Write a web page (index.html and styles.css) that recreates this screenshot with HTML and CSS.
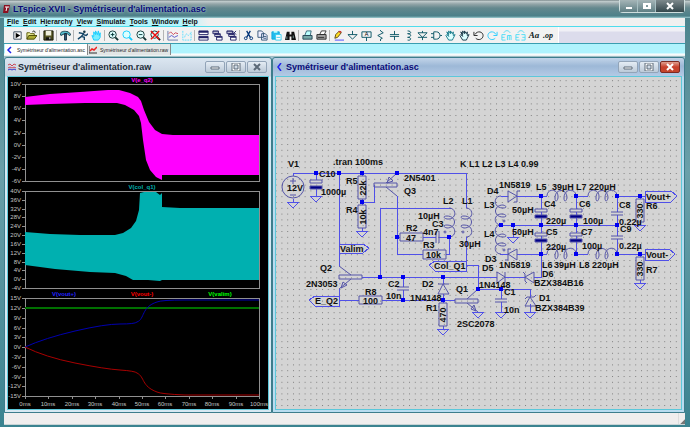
FILE: index.html
```
<!DOCTYPE html>
<html lang="fr">
<head>
    <meta charset="UTF-8">
    <meta name="viewport" content="width=device-width, initial-scale=1.0">
    <title>LTspice XVII - Symétriseur d'alimentation.asc</title>
    <link rel="stylesheet" href="styles.css">
</head>
<body>
    <!-- Title bar -->
    <header class="titlebar">
        <svg class="logo" viewBox="0 0 8 10"><path d="M1 1h6l-2 8H0z" fill="#8c1020"/><path d="M2 3h4M4 3l-1 4" stroke="#fff" fill="none"/></svg>
        <h1>LTspice XVII - Symétriseur d'alimentation.asc</h1>
        <div class="caption">
            <button aria-label="Minimize"><svg viewBox="0 0 12 10"><path d="M3 6h6v2H3z"/></svg></button>
            <button aria-label="Maximize"><svg viewBox="0 0 12 10"><path fill-rule="evenodd" d="M2 2h8v6H2zM5 4h2v2H5z"/></svg></button>
            <button class="close" aria-label="Close"><svg viewBox="0 0 12 10"><path d="M3 2l6 6M9 2l-6 6" class="cross"/></svg></button>
        </div>
    </header>

    <nav class="menu">
        <a href="#"><u>F</u>ile</a>
        <a href="#"><u>E</u>dit</a>
        <a href="#">H<u>i</u>erarchy</a>
        <a href="#"><u>V</u>iew</a>
        <a href="#"><u>S</u>imulate</a>
        <a href="#"><u>T</u>ools</a>
        <a href="#"><u>W</u>indow</a>
        <a href="#"><u>H</u>elp</a>
    </nav>

    <!-- Toolbar -->
    <div class="toolbar">
        <div class="tools">
            <button aria-label="New schematic"><svg viewBox="0 0 12 12"><path d="M2 2h8v8H2z" fill="#fff" stroke="#345"/><path d="M4 3l5 3-5 3z" fill="#000"/></svg></button>
            <button aria-label="Open"><svg viewBox="0 0 12 12"><path d="M1 10V3h3l1 1h4v2" fill="#ee9" stroke="#550"/><path d="M1 10l2-4h9l-3 4z" fill="#aa3" stroke="#440"/><path d="M7 2c2-2 3 0 3 1" fill="none" stroke="#000"/></svg></button>
            <i></i>
            <button aria-label="Save"><svg viewBox="0 0 12 12"><path d="M1 1h10v10H1z" fill="#552" stroke="#110"/><path d="M3 1h6v5H3z" fill="#eed"/><path d="M3 8h6v3H3z" fill="#111"/><path d="M7 8h1v2H7z" fill="#fff"/></svg></button>
            <i></i>
            <button aria-label="Control panel"><svg viewBox="0 0 12 12"><path d="M0 4c2-3 5-3 9-2l3 3-2 1-2-2H5L1 6z" fill="#5bc" stroke="#134"/><path d="M5 4h2v7H5z" fill="#368" stroke="#123"/></svg></button>
            <i></i>
            <button aria-label="Run"><svg viewBox="0 0 12 12"><circle cx="8" cy="2" r="1.4" fill="#134"/><path d="M2 3l5 1-2 3 3 1v3M5 7l-4 3M7 5l3 1 2-2" fill="none" stroke="#146" stroke-width="1.5"/></svg></button>
            <button aria-label="Halt"><svg viewBox="0 0 12 12"><path d="M3 11L1 6l2 1V2l2 3V1l2 4 1-4 1 5 1-3v5l-2 3z" fill="#7ef" stroke="#1cf"/></svg></button>
            <i></i>
            <button aria-label="Zoom in"><svg viewBox="0 0 12 12"><use href="#lens" class="dark"/><path d="M3 5h4M5 3v4" stroke="#033"/></svg></button>
            <button aria-label="Pan"><svg viewBox="0 0 12 12"><use href="#lens" class="cyan"/></svg></button>
            <button aria-label="Zoom out"><svg viewBox="0 0 12 12"><use href="#lens" class="dark"/><path d="M3 5h4" stroke="#033"/></svg></button>
            <button aria-label="Zoom full extents"><svg viewBox="0 0 12 12"><use href="#lens" class="dark"/><path d="M1 1l9 9M10 1L1 10" stroke="#e11" stroke-width="1.6"/></svg></button>
            <i></i>
            <button aria-label="Autorange"><svg viewBox="0 0 12 12"><path d="M1 1v10h11" fill="none" stroke="#67a"/><path d="M2 4l2-2 3 3 2-2 3 1" fill="none" stroke="#c45"/><path d="M2 8l3-2 3 2 4-2" fill="none" stroke="#55c"/></svg></button>
            <button aria-label="Plot settings"><svg viewBox="0 0 12 12"><path d="M2 1v10h9V2M4 8c1-5 3-4 4-2l3-3" fill="none" stroke="#5df" stroke-dasharray="2 1"/></svg></button>
            <i></i>
            <button aria-label="Tile windows"><svg viewBox="0 0 12 12"><path d="M1 1h10v4H1zM1 7h10v4H1z" fill="#fff" stroke="#226"/><path d="M1 1h10v2H1zM1 7h10v2H1z" fill="#226"/></svg></button>
            <button aria-label="Cascade windows"><svg viewBox="0 0 12 12"><use href="#cascade"/></svg></button>
            <button aria-label="Close all windows"><svg viewBox="0 0 12 12"><use href="#cascade"/><path d="M7 1l4 4M11 1L7 5" stroke="#226"/></svg></button>
            <i></i>
            <button aria-label="Cut"><svg viewBox="0 0 12 12"><path d="M4 1l4 7M8 1L4 8" stroke="#037" stroke-width="1.4"/><circle cx="3" cy="9" r="1.5" class="cut"/><circle cx="9" cy="9" r="1.5" class="cut"/></svg></button>
            <button aria-label="Copy"><svg viewBox="0 0 12 12"><path d="M1 1h4l2 2v5H1zM5 4h4l2 2v5H5z" fill="#eef" stroke="#357"/><path d="M7 7h3M7 9h3" stroke="#357"/></svg></button>
            <button aria-label="Paste"><svg viewBox="0 0 12 12"><path d="M1 2h8v8H1z" fill="#2be" stroke="#1ad"/><path d="M3 1h4v2H3z" fill="#bff"/><path d="M5 5h6v6H5z" fill="#fff" stroke="#3ce"/><path d="M6 8h4" stroke="#3ce"/></svg></button>
            <button aria-label="Find"><svg viewBox="0 0 12 12"><path d="M2 2h3v3h2V2h3l2 9H7V7H5v4H0z" fill="#111"/><path d="M2 7v3M9 6v3" stroke="#799"/></svg></button>
            <i></i>
            <button aria-label="Print setup"><svg viewBox="0 0 12 12"><path d="M3 6l2-5h5l-1 5z" fill="#bff" stroke="#367"/><path d="M1 6h10v4H1z" fill="#7aa" stroke="#245"/></svg></button>
            <button aria-label="Print"><svg viewBox="0 0 12 12"><path d="M4 5l2-4h5L9 5z" fill="#fff" stroke="#333"/><path d="M1 5h10v5H1z" fill="#aaa" stroke="#222"/><path d="M2 8h7" stroke="#222"/></svg></button>
            <i></i>
            <button aria-label="Wire"><svg viewBox="0 0 12 12"><path d="M2 9l1-4 4-4 2 2-4 5z" fill="#fd2" stroke="#541"/><path d="M6 1h3v2H7z" fill="#c33"/><path d="M2 11h10" stroke="#44f"/></svg></button>
            <button aria-label="Ground"><svg viewBox="0 0 12 12"><path d="M6 1v4M1 5h10L6 10z" class="part"/></svg></button>
            <button aria-label="Label net"><svg viewBox="0 0 12 12"><path d="M1 2h10v6H1zM6 8v4" class="part"/><text x="4" y="7" class="mini">A</text></svg></button>
            <button aria-label="Resistor"><svg viewBox="0 0 12 12"><path d="M6 0v1l3 2-6 3 5 3-2 1v2" class="part"/></svg></button>
            <button aria-label="Capacitor"><svg viewBox="0 0 12 12"><path d="M6 1v4M1 5h10M1 7h10M6 7v4" class="part"/></svg></button>
            <button aria-label="Inductor"><svg viewBox="0 0 12 12"><path d="M5 1c5 0 4 4 0 3 5 0 4 4 0 4 5 0 4 4 0 3" class="part"/></svg></button>
            <button aria-label="Diode"><svg viewBox="0 0 12 12"><path d="M6 1v2M1 3h10L6 8zM1 8h10M6 8v3" class="part"/></svg></button>
            <button aria-label="Component"><svg viewBox="0 0 12 12"><path d="M3 2h3c5 0 5 8 0 8H3zM0 4h3M0 8h3M10 6h2" class="part"/></svg></button>
            <button aria-label="Move"><svg viewBox="0 0 12 12"><use href="#palm" stroke="#178"/></svg></button>
            <button aria-label="Drag"><svg viewBox="0 0 12 12"><use href="#palm" stroke="#134"/></svg></button>
            <button aria-label="Undo"><svg viewBox="0 0 12 12"><path d="M2 5c3-5 9-3 9 1s-5 6-8 3M1 2v4h4" fill="none" stroke="#222"/></svg></button>
            <button aria-label="Redo"><svg viewBox="0 0 12 12"><path d="M10 5c-3-5-9-3-9 1s5 6 8 3M11 2v4H7" fill="none" stroke="#2cf"/></svg></button>
            <button aria-label="Rotate"><svg viewBox="0 0 12 12"><path d="M5 5H1v6h4M1 8h3M7 11V6h4v5M9 6v5M3 3c2-3 5-3 7 0" class="flip"/></svg></button>
            <button aria-label="Mirror"><svg viewBox="0 0 12 12"><path d="M5 5H1v6h4M1 8h3M7 5h4v6H7M8 8h3M3 3c2-3 5-3 7 0" class="flip"/></svg></button>
            <button class="word">Aa</button>
            <button class="word small">.op</button>
        </div>
    </div>

    <div class="tabs">
        <a href="#schematic" class="tab active">
            <svg viewBox="0 0 8 8"><path d="M5 1L2 4l3 3" fill="none" stroke="#22e" stroke-width="1.5"/></svg>
            Symétriseur d'alimentation.asc
        </a>
        <a href="#waveform" class="tab">
            <svg viewBox="0 0 8 8"><path d="M0 0v7h8" fill="none" stroke="#333"/><path d="M1 5l2-2 2 1 3-3" fill="none" stroke="#e22" stroke-width="1.5"/></svg>
            Symétriseur d'alimentation.raw
        </a>
    </div>

    <main class="workspace">
        <!-- Waveforms -->
        <section class="window" id="waveform">
            <header>
                <svg class="icon" viewBox="0 0 8 8"><path d="M0 2l2-1 2 2 2-2 2 1M0 5l2-1 2 1 2-1 2 1" fill="none" stroke="#c45"/><path d="M0 7l2-1 2 1 2-1 2 1" fill="none" stroke="#33c"/></svg>
                <h2>Symétriseur d'alimentation.raw</h2>
                <div class="controls">
                    <button aria-label="Minimize"><svg viewBox="0 0 10 8"><path d="M1 4h8v2H1z"/></svg></button>
                    <button aria-label="Maximize"><svg viewBox="0 0 10 8"><path fill-rule="evenodd" d="M1 0h8v8H1zM3 2h4v4H3z"/></svg></button>
                    <button aria-label="Close"><svg viewBox="0 0 10 8"><path d="M2 1l6 6M8 1L2 7" class="cross"/></svg></button>
                </div>
            </header>
            <div class="pane plots">
                <svg viewBox="8 77 260 332">
                    <g class="trace-name">
                        <text x="142" y="82" fill="#f0f">V(e_q2)</text>
                        <text x="142" y="189" fill="#00b0b0">V(col_q1)</text>
                        <text x="64" y="296" fill="#22f">V(vout+)</text>
                        <text x="142" y="296" fill="#f00">V(vout-)</text>
                        <text x="220" y="296" fill="#0f0">V(valim)</text>
                    </g>

                    <path class="frame" d="M25 84H259V181H25zM22 84h3M22 96h3M22 108h3M22 120h3M22 133h3M22 145h3M22 157h3M22 169h3M22 181h3"/>
                    <path fill="#f0f" d="M25 97L50 94 80 92 108 90H119L130 93 138 97 141 101 144 110 149 122 155 130 162 134 173 135H259V175H162V180L156 177 150 170 146 160 143 140 141 123 139 116 134 110 125 105 117 103H85L50 104 25 105z"/>

                    <path class="frame" d="M25 191H259V288H25zM22 191h3M22 200h3M22 209h3M22 217h3M22 226h3M22 235h3M22 244h3M22 253h3M22 262h3M22 270h3M22 279h3M22 288h3"/>
                    <path fill="#00b0b0" d="M25 232L50 234 80 235H115L123 233 131 228 136 221 139 210 140 193 144 192H156L160 195 162 193V207L180 208H259V280H162L160 281 148 280H133L126 276 115 273 90 272 55 269 25 265z"/>

                    <path class="frame" d="M25 298H259V396H25zM22 298h3M22 308h3M22 318h3M22 328h3M22 337h3M22 347h3M22 357h3M22 367h3M22 377h3M22 386h3M22 396h3M25 396v3M48 396v3M72 396v3M95 396v3M119 396v3M142 396v3M165 396v3M189 396v3M212 396v3M236 396v3M259 396v3"/>
                    <path class="wave" stroke="#007000" stroke-width="2" d="M25 308H259"/>
                    <path class="wave" stroke="#0000b0" d="M25 347Q45 338 75 331T120 324 137 322C145 319 141 307 157 302Q161 300 185 300H259"/>
                    <path class="wave" stroke="#a80000" d="M25 347Q45 357 75 363T120 370 137 373C145 377 141 386 157 392Q161 394 185 395H259"/>

                    <g class="scale">
                        <text x="21" y="86">10V</text><text x="21" y="98">8V</text><text x="21" y="110">6V</text><text x="21" y="122">4V</text><text x="21" y="135">2V</text><text x="21" y="147">0V</text><text x="21" y="159">-2V</text><text x="21" y="171">-4V</text><text x="21" y="183">-6V</text>
                        <text x="21" y="193">40V</text><text x="21" y="202">36V</text><text x="21" y="211">32V</text><text x="21" y="219">28V</text><text x="21" y="228">24V</text><text x="21" y="237">20V</text><text x="21" y="246">16V</text><text x="21" y="255">12V</text><text x="21" y="264">8V</text><text x="21" y="272">4V</text><text x="21" y="281">0V</text><text x="21" y="290">-4V</text>
                        <text x="21" y="300">15V</text><text x="21" y="310">12V</text><text x="21" y="320">9V</text><text x="21" y="330">6V</text><text x="21" y="339">3V</text><text x="21" y="349">0V</text><text x="21" y="359">-3V</text><text x="21" y="369">-6V</text><text x="21" y="379">-9V</text><text x="21" y="388">-12V</text><text x="21" y="398">-15V</text>
                    </g>
                    <g class="scale time">
                        <text x="25" y="406">0ms</text><text x="48" y="406">10ms</text><text x="72" y="406">20ms</text><text x="95" y="406">30ms</text><text x="119" y="406">40ms</text><text x="142" y="406">50ms</text><text x="165" y="406">60ms</text><text x="189" y="406">70ms</text><text x="212" y="406">80ms</text><text x="236" y="406">90ms</text><text x="259" y="406">100ms</text>
                    </g>
                </svg>
            </div>
        </section>

        <!-- Schematic -->
        <section class="window current" id="schematic">
            <header>
                <svg class="icon" viewBox="0 0 8 8"><path d="M5 0L2 4l3 4" fill="none" stroke="#22e" stroke-width="1.5"/></svg>
                <h2>Symétriseur d'alimentation.asc</h2>
                <div class="controls">
                    <button aria-label="Minimize"><svg viewBox="0 0 10 8"><path d="M1 4h8v2H1z"/></svg></button>
                    <button aria-label="Maximize"><svg viewBox="0 0 10 8"><path fill-rule="evenodd" d="M1 0h8v8H1zM3 2h4v4H3z"/></svg></button>
                    <button class="close" aria-label="Close"><svg viewBox="0 0 10 8"><path d="M2 1l6 6M8 1L2 7" class="cross"/></svg></button>
                </div>
            </header>
            <div class="pane circuit">
                <svg viewBox="276 77 405 332">
                    <defs>
                        <pattern id="dots" x="293" y="173" width="5.8" height="5.8" patternUnits="userSpaceOnUse"><rect width="1" height="1" fill="#808080"/></pattern>
                        <path id="gnd" d="M-6 0H6L0 6z"/>
                        <path id="res" d="M-4 0H4V23H-4z"/>
                        <path id="coil" d="M0 0C0-8 12-8 11 2 10 6 8 6 8 2 8-8 20-8 20 2 19 6 17 6 17 2 17-8 29-8 29 0"/>
                        <g id="ecap"><path d="M-6 0H6V3H-6z"/><path d="M-6 6H6V9H-6z" fill="#008"/></g>
                        <path id="cap" d="M-6 0H6M-6 3H6"/>
                        <rect id="node" x="-1" y="-1" width="4" height="4"/>
                    </defs>
                    <rect x="276" y="77" width="405" height="332" fill="url(#dots)"/>

                    <g class="wires">
                        <path d="M293 176V173H466V208M293 199V202M316 173V180M316 189V196M339 173V266M362 173V176M362 199V205M362 228V231M362 202H374V185M397 196V254H423M451 208H380V277M397 237H400M423 237H436M439 237H449V254H446M466 237V265H478V289"/>
                        <path d="M362 277H497M505 277H525M534 277H541V196M403 277V287M403 290V300M443 277V284M443 294V303M339 289V300H359M382 300H455M478 289H530V297M501 289V299M501 302V312M530 304V312M443 326V329"/>
                        <path d="M501 196H508M517 196H547M576 196H588M617 196H645M501 225H617M513 225V237M500 254H508M517 254H547M576 254H588M617 254H645M576 196V254M617 196V212M617 215V236M617 239V254M640 196V199M640 222V225M640 254V257M640 280V283"/>
                        <use href="#gnd" x="293" y="202"/><use href="#gnd" x="316" y="196"/><use href="#gnd" x="362" y="231"/><use href="#gnd" x="478" y="312"/><use href="#gnd" x="501" y="312"/><use href="#gnd" x="530" y="312"/><use href="#gnd" x="443" y="329"/><use href="#gnd" x="513" y="237"/><use href="#gnd" x="640" y="225"/><use href="#gnd" x="640" y="283"/>
                        <path d="M339 244H363L369 248 363 253H339zM339 296H315L309 300 315 306H339zM466 261H435L429 265 435 271H466zM645 191H671L677 196 671 202H645zM645 249H669L675 254 669 260H645z"/>
                    </g>

                    <!-- Parts -->
                    <g class="parts">
                        <circle cx="293" cy="187" r="11"/><path d="M290 181h6M293 178v6M290 195h6"/>
                        <use href="#res" x="362" y="176"/><use href="#res" x="362" y="205"/><use href="#res" x="640" y="199"/><use href="#res" x="640" y="257"/><use href="#res" x="443" y="303"/>
                        <path d="M400 233H423V241H400zM423 250H446V259H423zM359 296H382V304H359z"/>
                        <path d="M436 231V243M439 231V243"/>
                        <g class="cover"><use href="#ecap" x="316" y="180"/><use href="#ecap" x="541" y="209"/><use href="#ecap" x="576" y="209"/><use href="#ecap" x="541" y="233"/><use href="#ecap" x="576" y="233"/></g>
                        <g class="cover"><path stroke="none" d="M396 288H410V290H396zM494 300H508V302H494zM610 213H624V215H610zM610 237H624V239H610z"/></g>
                        <use href="#cap" x="403" y="287"/><use href="#cap" x="501" y="299"/><use href="#cap" x="617" y="212"/><use href="#cap" x="617" y="236"/>
                        <path d="M374 183H397V187H374zM397 173L386 183M386 187L397 196M387 183l2-6 4 4zM339 275H362V279H339zM339 266L351 275M351 279L339 289M341 288l2-6 4 3zM455 299H478V303H455zM478 289L467 299M467 303L478 312M476 311l-5-2 3-4z"/>
                        <path d="M508 191V202L517 196zM520 191H517V202H514M517 249V260L508 254zM511 249H508V260H505M497 272V283L505 277zM505 272V283M534 272V283L525 277zM523 272L525 274V281L527 283M438 294H449L443 284zM438 284H449M525 306H536L530 297zM525 299L527 297H534L536 295"/>
                        <use href="#coil" transform="translate(547 196)"/><use href="#coil" transform="translate(588 196)"/><use href="#coil" transform="translate(547 254)"/><use href="#coil" transform="translate(588 254)"/>
                        <use href="#coil" transform="translate(449 208) rotate(90)"/><use href="#coil" transform="translate(466 208) rotate(90)"/>
                        <use href="#coil" transform="translate(501 225) rotate(-90)"/><use href="#coil" transform="translate(501 254) rotate(-90)"/>
                        <circle cx="445" cy="232" r="1"/><circle cx="463" cy="232" r="1"/><circle cx="504" cy="221" r="1"/><circle cx="504" cy="250" r="1"/>
                    </g>

                    <g class="nodes">
                        <use href="#node" x="315" y="172"/><use href="#node" x="338" y="172"/><use href="#node" x="361" y="172"/><use href="#node" x="396" y="172"/><use href="#node" x="361" y="201"/><use href="#node" x="396" y="236"/><use href="#node" x="448" y="236"/>
                        <use href="#node" x="379" y="276"/><use href="#node" x="402" y="276"/><use href="#node" x="442" y="276"/><use href="#node" x="402" y="299"/><use href="#node" x="442" y="299"/><use href="#node" x="477" y="288"/><use href="#node" x="500" y="288"/>
                        <use href="#node" x="540" y="195"/><use href="#node" x="575" y="195"/><use href="#node" x="616" y="195"/><use href="#node" x="639" y="195"/><use href="#node" x="500" y="224"/><use href="#node" x="512" y="224"/><use href="#node" x="540" y="224"/><use href="#node" x="575" y="224"/><use href="#node" x="616" y="224"/>
                        <use href="#node" x="540" y="253"/><use href="#node" x="575" y="253"/><use href="#node" x="616" y="253"/><use href="#node" x="639" y="253"/>
                    </g>

                    <g class="labels">
                        <text x="288" y="167">V1</text><text x="287" y="191">12V</text><text x="319" y="177">C10</text><text x="321" y="195">1000µ</text>
                        <text x="333" y="165">.tran 100ms</text><text x="346" y="184">R5</text><text x="346" y="213">R4</text>
                        <text x="404" y="181">2N5401</text><text x="404" y="194">Q3</text><text x="460" y="167">K L1 L2 L3 L4 0.99</text>
                        <text x="443" y="204">L2</text><text x="462" y="204">L1</text><text x="418" y="219">10µH</text><text x="432" y="227">C3</text><text x="406" y="231">R2</text><text x="423" y="235">4n7</text><text x="406" y="241">47</text><text x="423" y="248">R3</text><text x="426" y="258">10k</text><text x="459" y="247">30µH</text>
                        <text x="340" y="252">Valim</text><text x="434" y="269">Col_Q1</text><text x="320" y="271">Q2</text><text x="306" y="287">2N3053</text><text x="315" y="304">E_Q2</text><text x="365" y="295">R8</text><text x="363" y="304">100</text>
                        <text x="388" y="287">C2</text><text x="386" y="299">10n</text><text x="422" y="287">D2</text><text x="410" y="301">1N4148</text><text x="426" y="311">R1</text><text x="456" y="292">Q1</text><text x="457" y="327">2SC2078</text>
                        <text x="482" y="271">D5</text><text x="485" y="262">D3</text><text x="499" y="268">1N5819</text><text x="479" y="288">1N4148</text><text x="504" y="295">C1</text><text x="504" y="313">10n</text>
                        <text x="487" y="194">D4</text><text x="499" y="188">1N5819</text><text x="484" y="208">L3</text><text x="484" y="237">L4</text><text x="512" y="213">50µH</text><text x="512" y="235">50µH</text>
                        <text x="536" y="190">L5</text><text x="552" y="190">39µH</text><text x="576" y="190">L7</text><text x="589" y="190">220µH</text><text x="544" y="207">C4</text><text x="579" y="207">C6</text><text x="619" y="208">C8</text>
                        <text x="546" y="224">220µ</text><text x="583" y="224">100µ</text><text x="619" y="225">0.22µ</text><text x="546" y="235">C5</text><text x="581" y="235">C7</text><text x="620" y="232">C9</text>
                        <text x="546" y="250">220µ</text><text x="582" y="249">100µ</text><text x="619" y="249">0.22µ</text><text x="542" y="268">L6</text><text x="554" y="268">39µH</text><text x="579" y="268">L8</text><text x="592" y="268">220µH</text>
                        <text x="646" y="200">Vout+</text><text x="646" y="209">R6</text><text x="646" y="258">Vout-</text><text x="646" y="273">R7</text>
                        <text x="542" y="277">D6</text><text x="534" y="286">BZX384B16</text><text x="539" y="301">D1</text><text x="535" y="311">BZX384B39</text>
                        <g class="upright">
                            <text transform="translate(366 188) rotate(-90)">22k</text><text transform="translate(366 217) rotate(-90)">10k</text><text transform="translate(643 211) rotate(-90)">330</text><text transform="translate(643 269) rotate(-90)">330</text><text transform="translate(446 315) rotate(-90)">470</text>
                        </g>
                    </g>
                </svg>
            </div>
        </section>
    </main>

    <footer class="status"><span></span></footer>

    <svg class="shared" aria-hidden="true">
        <symbol id="lens" viewBox="0 0 12 12"><circle cx="5" cy="5" r="4" fill="#dff" stroke="currentColor"/><path d="M8 8l3 3" stroke="currentColor" stroke-width="2"/></symbol>
        <symbol id="cascade" viewBox="0 0 12 12"><path d="M1 1h6v3H1zM3 4h6v3H3zM5 7h6v4H5z" fill="#fff" stroke="#226"/><path d="M1 2h6M3 5h6M5 8h6" stroke="#226"/></symbol>
        <symbol id="palm" viewBox="0 0 12 12"><path d="M4 11L1 6l1-1 2 2-2-5 2 3V1l2 3V1l2 3 1-2v4l2-1-2 4-1 2z" fill="#dff"/></symbol>
    </svg>
</body>
</html>
```
FILE: styles.css
```
* {
    margin: 0;
    padding: 0;
    box-sizing: border-box;
}

body {
    display: flex;
    flex-direction: column;
    height: 100vh;
    overflow: hidden;
    padding: 0 5px 2px 4px;
    background: linear-gradient(#4a808a, #6aa0aa 40%, #3b8390);
    font-family: "Liberation Sans", Arial, sans-serif;
}

a {
    color: inherit;
    text-decoration: none;
}

button {
    border: 0;
    background: none;
    font: inherit;
}

svg {
    display: block;
}

.shared {
    position: absolute;
    width: 0;
    height: 0;
}

/* Title bar */
.titlebar {
    display: flex;
    align-items: center;
    flex: 0 0 18px;
    margin: 0 -5px 0 -4px;
    padding: 0 5px 0 3px;
    background: linear-gradient(#5f6f72 0, #c6d0d1 1px, #93a5a8 4px, #64888e 8px, #4c8089 16px, #9ecdd2 18px);
    color: #0a0a78;
}

.logo {
    width: 8px;
    height: 10px;
    margin-right: 2px;
}

.titlebar h1 {
    font-size: 9px;
    line-height: 16px;
    text-shadow: 0 0 3px #b8dbe2;
}

.caption {
    display: flex;
    align-self: flex-start;
    margin-left: auto;
    border: 1px solid #cfdede;
    border-top: 0;
    border-radius: 0 0 4px 4px;
}

.caption button {
    display: flex;
    justify-content: center;
    align-items: center;
    width: 18px;
    height: 12px;
    background: linear-gradient(#a5b5b7, #5f7f84);
    border-right: 1px solid #a8bfc2;
}

.caption .close {
    width: 28px;
    border-right: 0;
    background: linear-gradient(#7d898c, #34484d);
}

.caption svg {
    width: 12px;
    height: 10px;
    fill: #fff;
}

.cross {
    stroke: #fff;
    stroke-width: 2;
}

/* Menu */
.menu {
    display: flex;
    gap: 4px;
    flex: 0 0 8px;
    padding-left: 3px;
    background: linear-gradient(90deg, #b4f4fc 0, #b4f4fc 180px, #f0f0f0 205px);
    color: #111;
    font-size: 7px;
    line-height: 7px;
    font-weight: bold;
}

/* Toolbar */
.toolbar {
    flex: 0 0 18px;
    display: flex;
    border-top: 1px solid #4fdcec;
    border-bottom: 1px solid #3a9eb0;
    background: linear-gradient(#f0f0f6 4px, #dcdcec 5px);
}

.tools {
    display: flex;
    align-items: center;
    padding: 0 3px 0 6px;
    background: #f2f2f2;
    border-right: 1px solid #fff;
}

.tools button {
    display: flex;
    justify-content: center;
    align-items: center;
    width: 14px;
    height: 14px;
}

.tools button svg {
    width: 11px;
    height: 11px;
}

.tools i {
    width: 1px;
    height: 11px;
    margin: 0 1px;
    background: #b4b4b4;
}

.dark {
    color: #133;
}

.cyan {
    color: #1cf;
}

.cut {
    fill: none;
    stroke: #037;
}

.part {
    fill: none;
    stroke: #055262;
}

.flip {
    fill: none;
    stroke: #4ddcf5;
}

.mini {
    font-size: 6px;
}

.tools .word {
    font: italic bold 9px "Liberation Serif", serif;
    color: #122;
}

.tools .small {
    font-size: 8px;
}

/* Document tabs */
.tabs {
    display: flex;
    flex: 0 0 13px;
    padding: 0 0 2px 1px;
    background: linear-gradient(#aff3fd 9px, #fff 10px, #e4ecee 12px, #568d98 13px);
}

.tab {
    display: flex;
    align-items: center;
    gap: 3px;
    padding: 0 2px 0 1px;
    background: #e2e6e6;
    border-right: 1px solid #888;
    color: #222;
    font-size: 5px;
    line-height: 10px;
    white-space: nowrap;
}

.tab.active {
    background: #fff;
}

.tab svg {
    width: 8px;
    height: 8px;
}

/* MDI windows */
.workspace {
    display: grid;
    grid-template-columns: 268fr 413fr;
    flex: 1;
    min-height: 0;
    background: #a8c4d4;
}

.window {
    display: flex;
    flex-direction: column;
    min-width: 0;
    min-height: 0;
    padding: 0 2px 2px;
    border: 1px solid #3d7d8c;
    border-radius: 3px 3px 0 0;
    background: linear-gradient(#dbe6f1, #c4d1df 18px, #d7e8f2 19px);
}

.window.current {
    background: linear-gradient(#c2d4e9, #9db8d7 8px, #b3cae5 18px, #b9dcf0 19px);
}

.window header {
    display: flex;
    align-items: center;
    flex: 0 0 18px;
    padding: 0 2px 0 1px;
}

.icon {
    width: 8px;
    height: 8px;
    margin-right: 2px;
}

.window h2 {
    color: #222b38;
    font-size: 9px;
    line-height: 16px;
    white-space: nowrap;
}

.window.current h2 {
    color: #0a0a78;
}

.controls {
    display: flex;
    gap: 1px;
    margin-left: auto;
}

.controls button {
    display: flex;
    justify-content: center;
    align-items: center;
    width: 20px;
    height: 12px;
    border: 1px solid #92a4b8;
    border-radius: 2px;
    background: linear-gradient(#e4ecf4, #bccad8);
}

.controls svg {
    width: 10px;
    height: 8px;
    fill: #fff;
    stroke: #5c6a78;
    stroke-width: 1;
}

.controls .cross {
    stroke: #5c6a78;
}

.controls .close {
    border-color: #7c2a22;
    background: linear-gradient(#e0a090, #c8402c 50%, #c4452c);
}

.controls .close .cross {
    stroke: #fff;
}

.pane {
    flex: 1;
    min-height: 0;
    border: 1px solid #5cc8da;
}

.pane svg {
    width: 100%;
    height: 100%;
}

/* Plots */
.plots {
    background: #000;
}

.trace-name {
    font: bold 6px "Liberation Sans", Arial, sans-serif;
    text-anchor: middle;
}

.scale {
    font: 6px "Liberation Sans", Arial, sans-serif;
    fill: #c4c4c4;
    text-anchor: end;
}

.time {
    text-anchor: middle;
}

.frame {
    fill: none;
    stroke: #909090;
    shape-rendering: crispEdges;
}

.wave {
    fill: none;
}

/* Circuit */
.circuit {
    background: #d4d4d4;
}

.wires {
    fill: none;
    stroke: #5050e8;
    shape-rendering: crispEdges;
}

.parts {
    fill: none;
    stroke: #5555a8;
}

.cover {
    fill: #d4d4d4;
}

.nodes {
    fill: #0000f0;
}

.labels {
    fill: #111;
    font: bold 9px "Liberation Sans", Arial, sans-serif;
}

.upright {
    text-anchor: middle;
}

/* Status bar */
.status {
    flex: 0 0 12px;
    display: flex;
    justify-content: flex-end;
    background: #f0eeee;
    border-bottom: 1px solid #c8d4d6;
}

.status span {
    width: 7px;
    border-left: 1px solid #ddd;
    background: linear-gradient(135deg, transparent 70%, #777 72%);
}
```
